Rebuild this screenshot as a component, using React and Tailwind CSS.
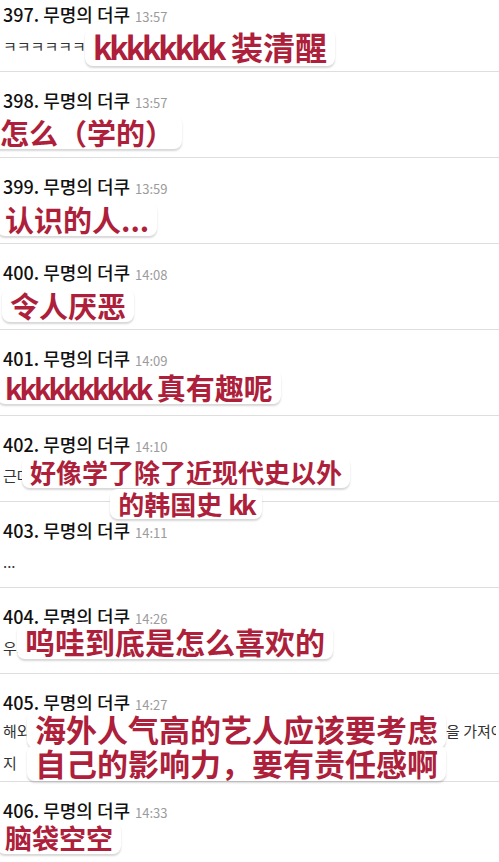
import React from "react";

const kr = "font-['Noto_Sans_CJK_KR','Noto_Sans',sans-serif]";
const sc = "font-['Noto_Sans_CJK_SC','Noto_Sans',sans-serif]";

function Caption({ lines, pos, size }) {
  return (
    <div className={`absolute z-10 flex flex-col items-center ${pos}`}>
      {lines.map((l, i) => (
        <span
          key={i}
          className={`block whitespace-nowrap rounded-[8px] bg-white px-[8px] font-bold leading-[1.18] text-[#ad1f3b] shadow-[0_2px_2px_rgba(0,0,0,0.16)] ${sc} ${size}`}
        >
          {l}
        </span>
      ))}
    </div>
  );
}

function K({ children }) {
  return <span className="tracking-[-3px]">{children}</span>;
}

function Entry({ no, time, children, tall }) {
  return (
    <div
      className={`relative border-b border-[#dedede] px-[3px] ${tall ? "h-[108px]" : "h-[86px]"}`}
    >
      <div className={`flex items-baseline pt-[16px] leading-[24px] ${kr}`}>
        <span className="text-[18px] font-medium text-[#111]">{no}. 무명의 더쿠</span>
        <span className="ml-[5px] text-[13px] text-[#9b9b9b]">{time}</span>
      </div>
      {children}
    </div>
  );
}

const bodyCls = `mt-[4px] overflow-hidden whitespace-nowrap text-[15px] leading-[26px] text-[#333] ${kr}`;

export default function App() {
  return (
    <div className="h-[862px] w-[499px] overflow-hidden bg-white">
      <div className="-mt-[14px]">
        <Entry no="397" time="13:57">
          <div className={bodyCls}>ㅋㅋㅋㅋㅋㅋㅋㅋㅋㅋㅋㅋㅋㅋㅋㅋㅋㅋㅋㅋㅋㅋ</div>
          <Caption
            lines={[<><K>kkkkkkkk</K> 装清醒</>]}
            size="text-[32px]"
            pos="top-[42px] left-[85px]"
          />
        </Entry>
        <Entry no="398" time="13:57">
          <div className={bodyCls}>어떻게 (배운거)</div>
          <Caption lines={["怎么（学的）"]} size="text-[29px]" pos="top-[43px] -left-[8px]" />
        </Entry>
        <Entry no="399" time="13:59">
          <div className={bodyCls}>아는 사람...</div>
          <Caption lines={["认识的人..."]} size="text-[29px]" pos="top-[44px] -left-[3px]" />
        </Entry>
        <Entry no="400" time="14:08">
          <div className={bodyCls}>정떨어져</div>
          <Caption lines={["令人厌恶"]} size="text-[29px]" pos="top-[44px] left-[2px]" />
        </Entry>
        <Entry no="401" time="14:09">
          <div className={bodyCls}>ㅋㅋㅋㅋㅋㅋㅋㅋㅋㅋ 진짜 웃기다</div>
          <Caption
            lines={[<><K>kkkkkkkkkk</K> 真有趣呢</>]}
            size="text-[29px]"
            pos="top-[40px] -left-[3px]"
          />
        </Entry>
        <Entry no="402" time="14:10">
          <div className={bodyCls}>근데 한국사는 근현대사 빼고 배운거야ㅋㅋ</div>
          <Caption
            lines={["好像学了除了近现代史以外", <>的韩国史 <K>kk</K></>]}
            size="text-[26px]"
            pos="top-[41px] left-[22px] gap-[1px]"
          />
        </Entry>
        <Entry no="403" time="14:11">
          <div className={bodyCls}>...</div>
        </Entry>
        <Entry no="404" time="14:26">
          <div className={bodyCls}>우와 도대체 어떻게 좋아하게 된 거야</div>
          <Caption lines={["呜哇到底是怎么喜欢的"]} size="text-[30px]" pos="top-[36px] left-[17px]" />
        </Entry>
        <Entry no="405" time="14:27" tall>
          <div className={`-mt-[2px] text-[15px] leading-[32px] text-[#333] ${kr}`}>
            <div className="flex overflow-hidden whitespace-nowrap">
              <span className="inline-block w-[443px] shrink-0 overflow-hidden">
                해외에서 인기 많은 연예인이면 자기 영향력을 생각해서
              </span>
              <span className="shrink-0">을 가져야지</span>
            </div>
            <div>지</div>
          </div>
          <Caption
            lines={["海外人气高的艺人应该要考虑", "自己的影响力，要有责任感啊"]}
            size="text-[31px]"
            pos="top-[37px] left-[27px] -space-y-[3px]"
          />
        </Entry>
        <Entry no="406" time="14:33">
          <div className={bodyCls}>머리가 텅텅</div>
          <Caption lines={["脑袋空空"]} size="text-[27px]" pos="top-[40px] -left-[3px]" />
        </Entry>
      </div>
    </div>
  );
}
